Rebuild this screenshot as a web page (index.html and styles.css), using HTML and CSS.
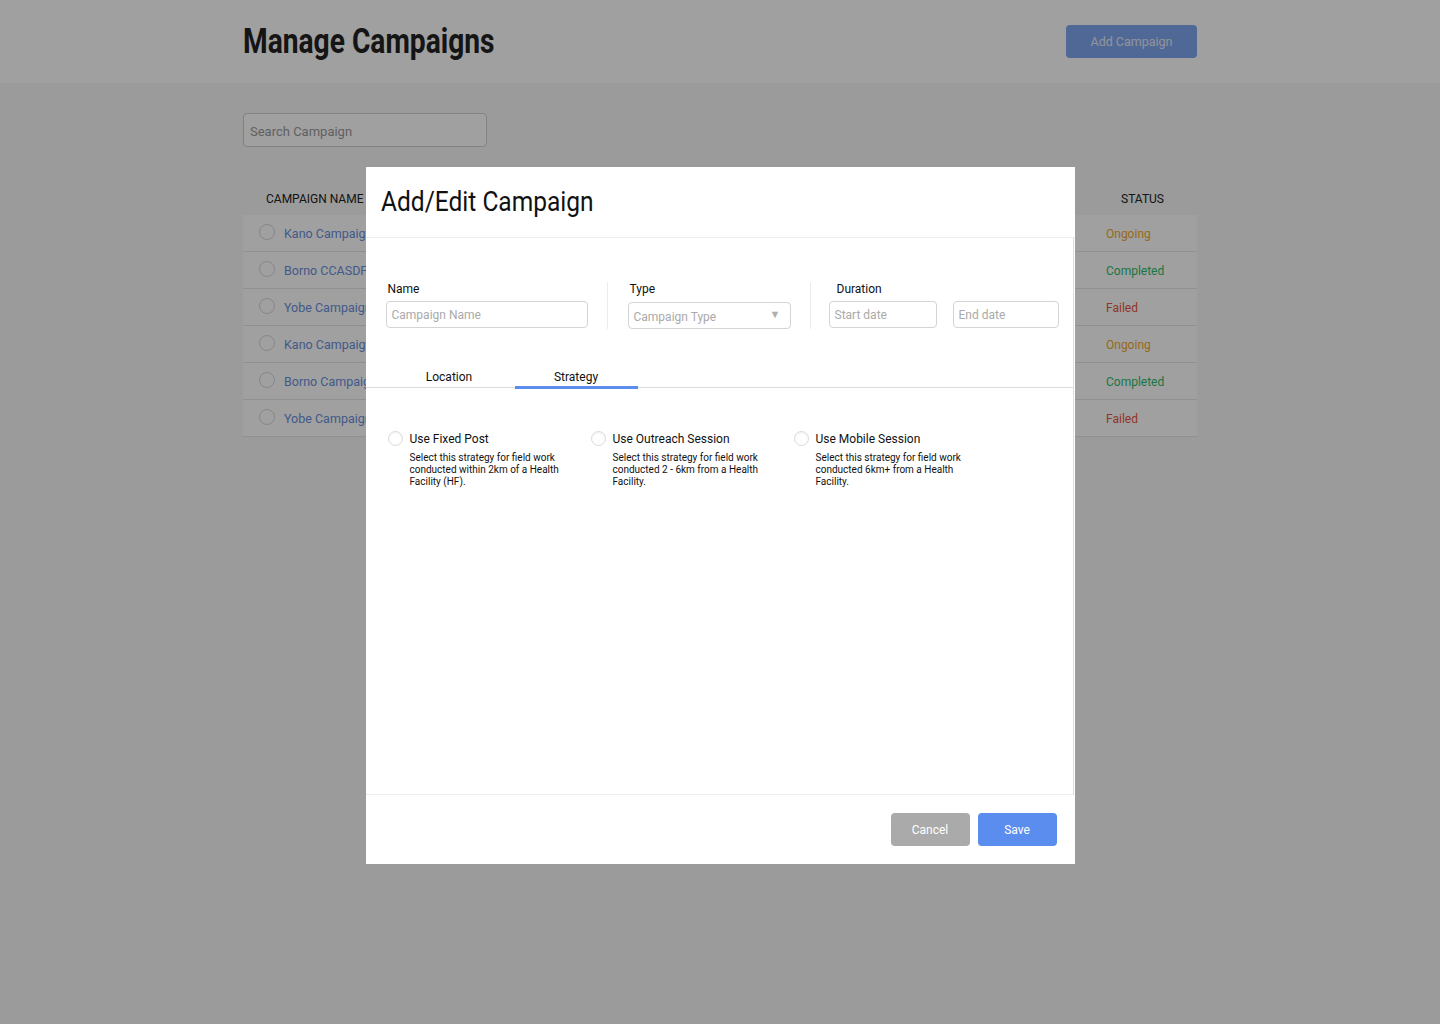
FILE: index.html
```html
<!DOCTYPE html>
<html lang="en">
<head>
<meta charset="utf-8">
<title>Manage Campaigns</title>
<link rel="stylesheet" href="styles.css">
</head>
<body>
<header class="topbar">
  <div class="container topbar-inner">
    <h1 class="page-title">Manage Campaigns</h1>
    <button class="btn btn-add">Add Campaign</button>
  </div>
</header>
<main class="container main">
  <input class="search" type="text" placeholder="Search Campaign">
  <div class="table">
    <div class="thead">
      <div class="col-name">CAMPAIGN NAME</div>
      <div class="col-status-h">STATUS</div>
    </div>
    <div class="trow"><span class="dot"></span><span class="link">Kano Campaign 1</span><span class="status ongoing">Ongoing</span></div>
    <div class="trow"><span class="dot"></span><span class="link">Borno CCASDFAS</span><span class="status completed">Completed</span></div>
    <div class="trow"><span class="dot"></span><span class="link">Yobe Campaign 1</span><span class="status failed">Failed</span></div>
    <div class="trow"><span class="dot"></span><span class="link">Kano Campaign 2</span><span class="status ongoing">Ongoing</span></div>
    <div class="trow"><span class="dot"></span><span class="link">Borno Campaign 2</span><span class="status completed">Completed</span></div>
    <div class="trow"><span class="dot"></span><span class="link">Yobe Campaign 2</span><span class="status failed">Failed</span></div>
  </div>
</main>

<div class="overlay">
  <div class="modal">
    <div class="modal-head"><h2 class="modal-title">Add/Edit Campaign</h2></div>
    <div class="modal-body">
      <div class="form-row">
        <div class="field f-name">
          <label class="lbl">Name</label>
          <input class="inp inp-name" type="text" placeholder="Campaign Name">
        </div>
        <div class="vsep"></div>
        <div class="field f-type">
          <label class="lbl">Type</label>
          <div class="inp select"><span>Campaign Type</span><span class="caret">&#9660;</span></div>
        </div>
        <div class="vsep vsep2"></div>
        <div class="field f-dur">
          <label class="lbl lbl-dur">Duration</label>
          <div class="dates">
            <input class="inp inp-start" type="text" placeholder="Start date">
            <input class="inp inp-end" type="text" placeholder="End date">
          </div>
        </div>
      </div>
      <div class="tabs">
        <div class="tab">Location</div>
        <div class="tab active">Strategy</div>
      </div>
      <div class="options">
        <div class="opt">
          <span class="radio"></span>
          <div class="opt-text">
            <div class="opt-title">Use Fixed Post</div>
            <div class="opt-desc">Select this strategy for field work conducted within 2km of a Health Facility (HF).</div>
          </div>
        </div>
        <div class="opt">
          <span class="radio"></span>
          <div class="opt-text">
            <div class="opt-title">Use Outreach Session</div>
            <div class="opt-desc">Select this strategy for field work conducted 2 - 6km from a Health Facility.</div>
          </div>
        </div>
        <div class="opt">
          <span class="radio"></span>
          <div class="opt-text">
            <div class="opt-title">Use Mobile Session</div>
            <div class="opt-desc">Select this strategy for field work conducted 6km+ from a Health Facility.</div>
          </div>
        </div>
      </div>
    </div>
    <div class="modal-foot">
      <button class="btn btn-cancel">Cancel</button>
      <button class="btn btn-save">Save</button>
    </div>
  </div>
</div>
</body>
</html>
```

FILE: styles.css
```css
* { box-sizing: border-box; }
html, body { margin: 0; padding: 0; }
body {
  background: #f7f7f7;
  font-family: Roboto, "Liberation Sans", Arial, sans-serif;
  color: #222;
  width: 1440px;
  height: 1024px;
  overflow: hidden;
}
.container { width: 954px; margin: 0 auto; }

.topbar { background: #fff; height: 83px; }
.topbar-inner { display: flex; justify-content: space-between; align-items: flex-start; }
.page-title {
  margin: 0;
  padding-top: 22px;
  font-size: 35px;
  font-weight: 700;
  line-height: 40px;
  color: #222;
  transform: scaleX(0.805);
  transform-origin: left center;
  white-space: nowrap;
}
.btn {
  border: 0;
  border-radius: 4px;
  font-family: Roboto, "Liberation Sans", Arial, sans-serif;
  font-size: 12px;
  color: #fff;
  cursor: pointer;
}
.btn-add {
  margin-top: 25px;
  width: 131px;
  height: 33px;
  background: #80a6f0;
  color: #e6ecf7;
  font-size: 12.5px;
}

.main { padding-top: 30px; }
.search {
  display: block;
  width: 244px;
  height: 34px;
  border: 1px solid #cfcfcf;
  border-radius: 4px;
  padding: 2px 6px 0;
  font-family: Roboto, "Liberation Sans", Arial, sans-serif;
  font-size: 13px;
  background: #fff;
}
.search::placeholder { color: #9a9a9a; }

.table { margin-top: 33px; }
.thead {
  display: flex;
  justify-content: space-between;
  height: 35px;
  padding-top: 3px;
  align-items: center;
  font-size: 12px;
  color: #222;
}
.col-name { padding-left: 23px; }
.col-status-h { padding-right: 33px; }
.trow {
  display: flex;
  align-items: center;
  height: 37px;
  background: #fff;
  border-bottom: 1px solid #e6e6e6;
  font-size: 12.5px;
  padding-left: 16px;
  padding-top: 1px;
}
.dot {
  width: 16px; height: 16px;
  border-radius: 50%;
  border: 1px solid #d6d6d6;
  margin-right: 9px;
  margin-top: -3px;
}
.link { color: #6a8fdc; flex: 1; }
.status { width: 91px; font-size: 12px; }
.ongoing { color: #f0a92a; }
.completed { color: #2dbd6a; }
.failed { color: #e8563a; }

.overlay {
  position: fixed;
  inset: 0;
  background: rgba(0, 0, 0, 0.373);
  display: flex;
  justify-content: center;
  align-items: flex-start;
  padding-top: 167px;
}
.modal {
  width: 709px;
  height: 697px;
  background: #fff;
  display: flex;
  flex-direction: column;
}
.modal-head {
  height: 71px;
  border-bottom: 1px solid #ececec;
  padding: 18px 15px 0;
}
.modal-title {
  margin: 0;
  font-size: 28px;
  font-weight: 400;
  line-height: 34px;
  color: #111;
  transform: scaleX(0.876);
  transform-origin: left center;
  white-space: nowrap;
}
.modal-body {
  flex: 1;
  width: 708px;
  border-right: 1px solid #dcdcdc;
  border-bottom: 1px solid #ececec;
  padding-top: 44px;
}
.form-row { display: flex; align-items: stretch; padding-left: 20px; }
.field { display: flex; flex-direction: column; }
.lbl { font-size: 12px; color: #111; padding-left: 2px; line-height: 14px; margin-bottom: 5px; }
.lbl-dur { padding-left: 8px; }
.inp {
  height: 27px;
  border: 1px solid #d4d4d4;
  border-radius: 4px;
  font-family: Roboto, "Liberation Sans", Arial, sans-serif;
  font-size: 12px;
  padding: 0 5px;
  color: #aaa;
  background: #fff;
}
.inp::placeholder { color: #aaa; }
.inp-name { width: 202px; }
.vsep { width: 1px; background: #ececec; margin: 0 20px 0 19px; height: 47px; }
.vsep2 { margin-right: 18px; }
.select {
  width: 163px;
  display: flex;
  align-items: center;
  justify-content: space-between;
  margin-top: 1px;
  padding: 2px 9px 0 5px;
}
.caret { font-size: 11px; color: #b0b0b0; margin-top: -4px; }
.dates { display: flex; gap: 16px; }
.inp-start { width: 108px; }
.inp-end { width: 106px; }

.tabs {
  display: flex;
  margin-top: 32px;
  padding-left: 22px;
  border-bottom: 1px solid #dcdcdc;
  gap: 4px;
}
.tab {
  width: 123px;
  text-align: center;
  font-size: 12px;
  color: #111;
  height: 28px;
  line-height: 16px;
  padding-top: 8px;
  border-bottom: 3px solid transparent;
  margin-bottom: -2px;
}
.tab.active { border-bottom-color: #5b8def; }

.options {
  display: flex;
  padding: 43px 0 0 22px;
}
.opt { display: flex; width: 203px; }
.radio {
  width: 15px; height: 15px;
  border-radius: 50%;
  border: 1px solid #dadada;
  box-shadow: inset 0 1px 2px rgba(0,0,0,0.06);
  margin-right: 7px;
  margin-top: 0;
  flex-shrink: 0;
}
.opt-text { width: 160px; }
.opt-title { font-size: 12px; color: #111; line-height: 16px; }
.opt-desc { font-size: 10px; color: #111; line-height: 12px; margin-top: 5px; }

.modal-foot {
  height: 69px;
  display: flex;
  justify-content: flex-end;
  align-items: flex-start;
  gap: 8px;
  padding: 18px 18px 0 0;
}
.btn-cancel { width: 79px; height: 33px; background: #aaaaaa; }
.btn-save { width: 79px; height: 33px; background: #5b8def; }
```
